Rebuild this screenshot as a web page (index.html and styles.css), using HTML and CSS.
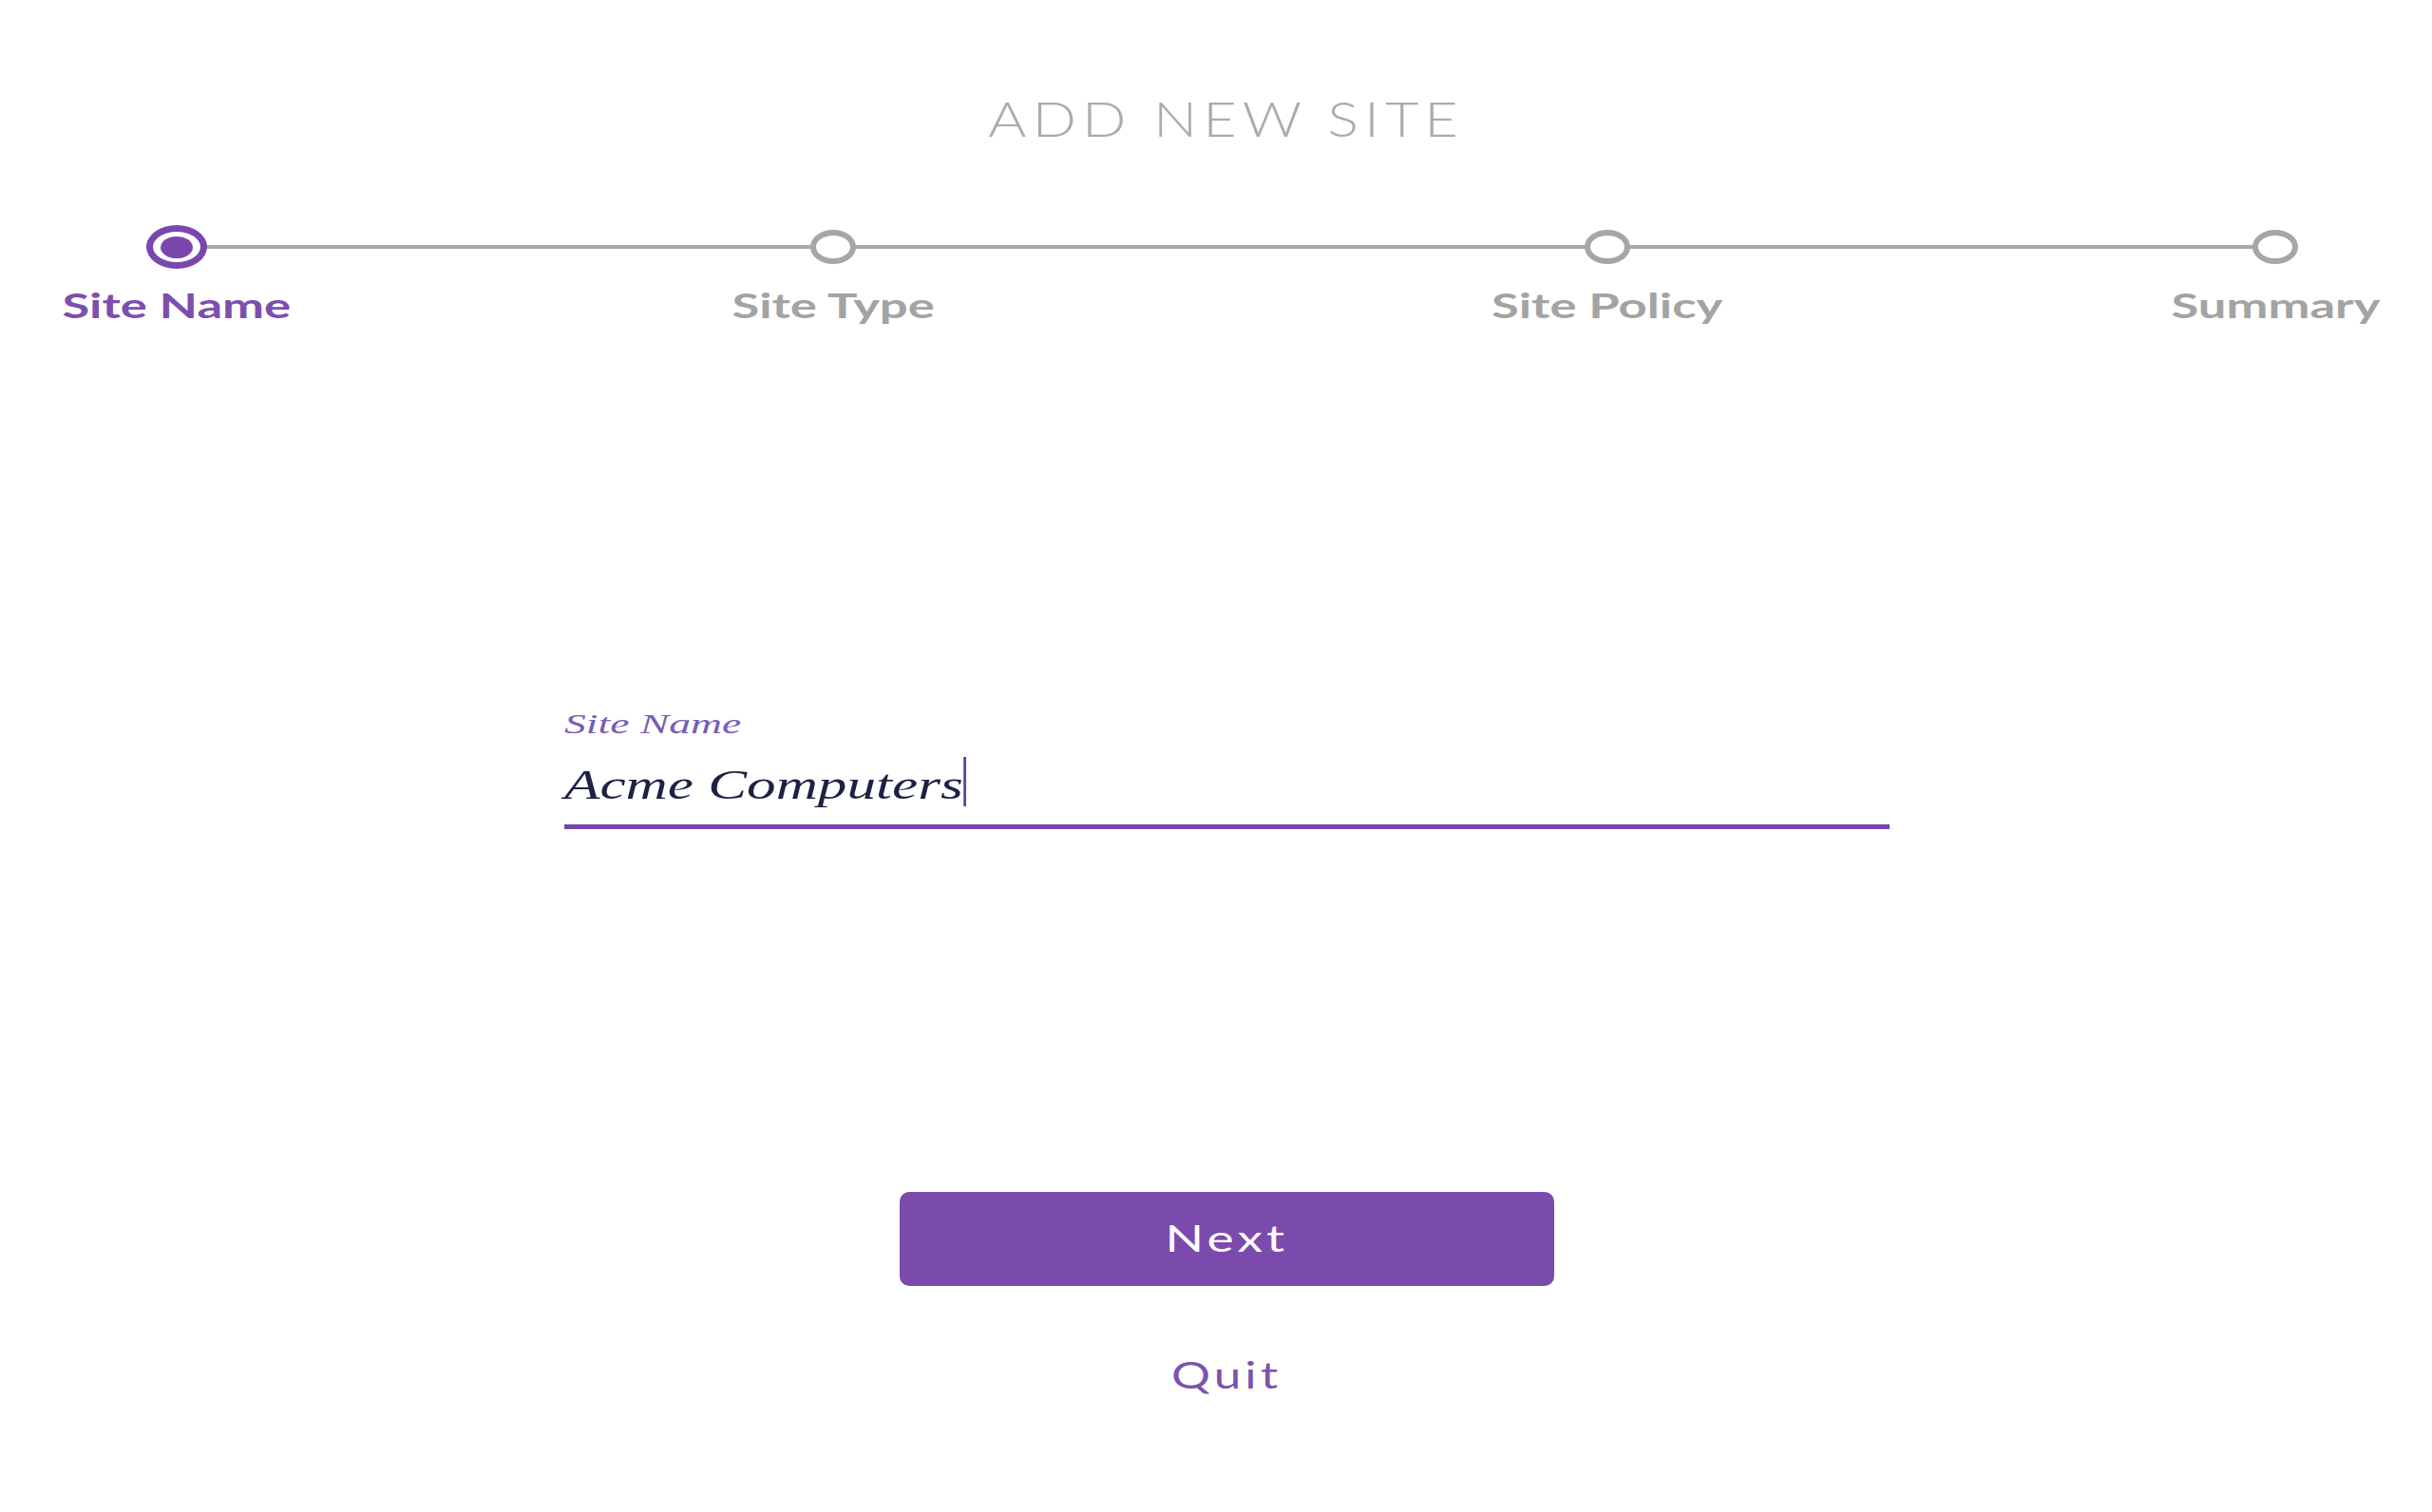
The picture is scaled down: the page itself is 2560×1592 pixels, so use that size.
FILE: index.html
```html
<!DOCTYPE html>
<html lang="en">
<head>
<meta charset="utf-8">
<title>Add New Site</title>
<link rel="stylesheet" href="styles.css">
</head>
<body>
<div class="page">
  <h1 class="title"><span class="title-text">ADD NEW SITE</span></h1>

  <div class="stepper">
    <div class="step active">
      <div class="dot-row"><span class="dot"></span></div>
      <span class="step-label">Site Name</span>
    </div>
    <div class="conn"></div>
    <div class="step">
      <div class="dot-row"><span class="dot"></span></div>
      <span class="step-label">Site Type</span>
    </div>
    <div class="conn"></div>
    <div class="step">
      <div class="dot-row"><span class="dot"></span></div>
      <span class="step-label">Site Policy</span>
    </div>
    <div class="conn"></div>
    <div class="step">
      <div class="dot-row"><span class="dot"></span></div>
      <span class="step-label">Summary</span>
    </div>
  </div>

  <div class="form">
    <label class="field-label"><span class="field-label-text">Site Name</span></label>
    <div class="field"><span class="value">Acme Computers</span></div>
  </div>

  <button class="next"><span class="next-text">Next</span></button>
  <a class="quit"><span class="quit-text">Quit</span></a>
</div>
</body>
</html>
```
FILE: styles.css
```css
html, body {
  margin: 0;
  padding: 0;
  background: #ffffff;
}

.page {
  display: flex;
  flex-direction: column;
  align-items: center;
  padding-left: 22px;
  min-height: 1592px;
  box-sizing: border-box;
  font-family: "Lato", "Open Sans", sans-serif;
}

/* Title */
.title {
  margin: 99px 0 0 0;
  height: 51px;
  font-size: 51px;
  line-height: 51px;
  font-weight: 300;
  color: #ababab;
  letter-spacing: 5px;
}
.title-text {
  display: inline-block;
  transform: scaleX(1.2);
  transform-origin: center;
}

/* Stepper */
.stepper {
  align-self: stretch;
  margin-top: 87px;
  padding-left: 44px;
  display: grid;
  grid-template-columns: 240px 451px 240px 575px 240px 463px 240px;
  align-items: start;
}
.step {
  display: flex;
  flex-direction: column;
  align-items: center;
}
.dot-row {
  height: 46px;
  display: flex;
  align-items: center;
  justify-content: center;
}
.dot {
  position: relative;
  z-index: 1;
  box-sizing: border-box;
  width: 48px;
  height: 36px;
  border-radius: 50%;
  border: 6px solid #a6a6a6;
  background: #ffffff;
  display: flex;
  align-items: center;
  justify-content: center;
}
.step.active .dot {
  width: 64px;
  height: 46px;
  border: 7px solid #7a47ad;
}
.step.active .dot::after {
  content: "";
  width: 34px;
  height: 23px;
  border-radius: 50%;
  background: #7a47ad;
}
.conn {
  height: 4px;
  margin: 21px -120px 0 -120px;
  background: #a9a9a9;
}
.step-label {
  display: inline-block;
  margin-top: 19px;
  font-size: 37px;
  line-height: 37px;
  font-weight: 700;
  color: #a3a3a3;
  white-space: nowrap;
  transform: scaleX(1.42);
  transform-origin: center;
}
.step.active .step-label {
  color: #7c4fae;
}

/* Form */
.form {
  margin-top: 408px;
  width: 1395px;
  display: flex;
  flex-direction: column;
}
.field-label {
  height: 30px;
  font-family: "Liberation Serif", "Times New Roman", serif;
  font-style: italic;
  font-size: 30px;
  line-height: 30px;
  color: #7a5cb6;
}
.field-label-text {
  display: inline-block;
  transform: scaleX(1.52);
  transform-origin: left;
}
.field {
  margin-top: 27px;
  height: 45px;
  padding-bottom: 19px;
  border-bottom: 5px solid #7446ad;
  font-family: "Liberation Serif", "Times New Roman", serif;
  font-style: italic;
  font-size: 45px;
  line-height: 45px;
  color: #1d2244;
}
.value {
  display: inline-block;
  white-space: nowrap;
  transform: scaleX(1.36);
  transform-origin: left;
}
.value::after {
  content: "";
  display: inline-block;
  width: 2px;
  height: 52px;
  margin-top: -8px;
  vertical-align: -8px;
  background: #5d3fa5;
}

/* Buttons */
.next {
  margin-top: 382px;
  width: 689px;
  height: 99px;
  border: none;
  border-radius: 10px;
  background: #7b4aad;
  color: #ffffff;
  font-family: "Lato", "Open Sans", sans-serif;
  font-size: 38px;
  line-height: 38px;
  font-weight: 400;
  letter-spacing: 3px;
  display: flex;
  align-items: center;
  justify-content: center;
  padding: 0 0 4px 0;
}
.next-text {
  display: inline-block;
  transform: scaleX(1.4);
}
.quit {
  margin-top: 74px;
  font-size: 38px;
  line-height: 38px;
  font-weight: 400;
  color: #7b52ad;
  letter-spacing: 3px;
  cursor: pointer;
}
.quit-text {
  display: inline-block;
  transform: scaleX(1.35);
}
```
